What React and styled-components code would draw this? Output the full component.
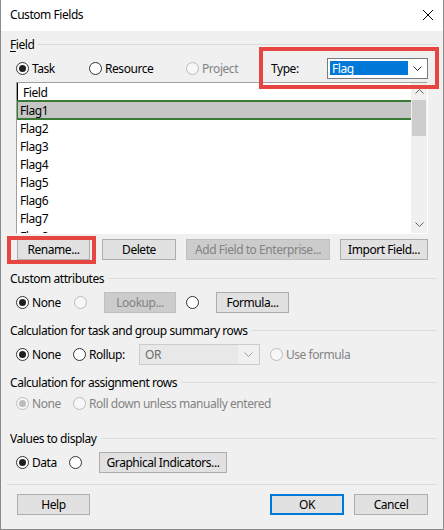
import React from "react";
import styled, { createGlobalStyle } from "styled-components";

const Global = createGlobalStyle`
  html, body { margin: 0; padding: 0; background: #ffffff; }
  body {
    font-family: "Segoe UI", "Noto Sans", "Open Sans", sans-serif;
    font-size: 12px;
    letter-spacing: -0.45px;
    color: #000;
  }
  * { box-sizing: border-box; }
`;

const Window = styled.div`
  width: 444px;
  height: 530px;
  border: 1px solid #8a8a8a;
  border-top: 0;
  background: #f0f0f0;
  display: flex;
  flex-direction: column;
  overflow: hidden;
`;

const TitleBar = styled.div`
  height: 31px;
  flex: none;
  background: #ffffff;
  display: flex;
  align-items: center;
  justify-content: space-between;
  padding: 0 9px 0 9px;
  font-size: 12px;
`;

const Title = styled.span`
  line-height: 16px;
  margin-top: -1px;
`;

const CloseBtn = styled.span`
  display: flex;
  width: 10px;
  height: 10px;
  margin-right: 1px;
  margin-top: -1px;
`;

const Body = styled.div`
  flex: 1;
  display: flex;
  flex-direction: column;
  padding: 0 6px 0 9px;
`;

const GroupHeader = styled.div`
  display: flex;
  align-items: center;
  height: 16px;
  margin-top: ${(p) => p.$mt}px;
  white-space: nowrap;
  &::after {
    content: "";
    flex: 1;
    height: 1px;
    background: #dcdcdc;
    margin-left: 4px;
  }
`;

const U = styled.span`
  text-decoration: underline;
  text-underline-offset: 2px;
`;

const Row = styled.div`
  display: flex;
  align-items: center;
  height: ${(p) => p.$h || 21}px;
  margin-top: ${(p) => p.$mt}px;
  padding-left: 6px;
  padding-right: 9px;
  white-space: nowrap;
`;

const RadioItem = styled.div`
  display: flex;
  align-items: center;
  flex: none;
  width: ${(p) => (p.$w ? `${p.$w}px` : "auto")};
  margin-left: ${(p) => p.$ml || 0}px;
  color: ${(p) => (p.$disabled ? "#838383" : "#000")};
`;

const Circle = styled.span`
  width: 13px;
  height: 13px;
  flex: none;
  border-radius: 50%;
  border: 1px solid ${(p) => (p.$disabled ? "#bcbcbc" : "#333333")};
  background: ${(p) => (p.$disabled ? "#f7f7f7" : "#ffffff")};
  display: flex;
  align-items: center;
  justify-content: center;
  margin-right: 3px;
  &::after {
    content: "";
    display: ${(p) => (p.$checked ? "block" : "none")};
    width: 7px;
    height: 7px;
    border-radius: 50%;
    background: ${(p) => (p.$disabled ? "#bcbcbc" : "#1f1f1f")};
  }
`;

const Radio = ({ label, checked, disabled, w, ml }) => (
  <RadioItem $w={w} $ml={ml} $disabled={disabled}>
    <Circle $checked={checked} $disabled={disabled} />
    {label && <span>{label}</span>}
  </RadioItem>
);

const Highlight = styled.div`
  position: relative;
  display: flex;
  align-items: center;
  flex: none;
  margin-left: ${(p) => p.$ml || 0}px;
  &::after {
    content: "";
    position: absolute;
    top: ${(p) => p.$t}px;
    bottom: ${(p) => p.$b}px;
    left: ${(p) => p.$l}px;
    right: ${(p) => p.$r}px;
    border: 4px solid #e6463f;
    pointer-events: none;
  }
`;

const TypeLabel = styled.span`
  width: 56px;
`;

const Combo = styled.div`
  width: ${(p) => p.$w}px;
  height: 21px;
  flex: none;
  border: 1px solid ${(p) => (p.$disabled ? "#cccccc" : "#7a7a7a")};
  background: ${(p) => (p.$disabled ? "#f0f0f0" : "#ffffff")};
  display: flex;
  align-items: stretch;
  padding: ${(p) => (p.$disabled ? "0" : "2px 0 3px 2px")};
`;

const ComboValue = styled.div`
  flex: 1;
  display: flex;
  align-items: center;
  padding-left: ${(p) => (p.$disabled ? 5 : 2)}px;
  background: ${(p) => (p.$disabled ? "#e8e8e8" : "#0078d7")};
  color: ${(p) => (p.$disabled ? "#6d6d6d" : "#ffffff")};
`;

const ComboArrow = styled.div`
  width: ${(p) => p.$w}px;
  flex: none;
  display: flex;
  align-items: center;
  justify-content: center;
`;

const Chevron = ({ color = "#333", up = false }) => (
  <svg width="9" height="5" viewBox="0 0 9 5">
    <polyline
      points={up ? "0.5,4.5 4.5,0.5 8.5,4.5" : "0.5,0.5 4.5,4.5 8.5,0.5"}
      fill="none"
      stroke={color}
      strokeWidth="1"
    />
  </svg>
);

const ListBox = styled.div`
  height: 152px;
  margin: 3px 9px 0 6px;
  border-style: solid;
  border-width: 1px;
  border-color: #a0a0a0 #ffffff #ffffff #a0a0a0;
  background: #ffffff;
  display: flex;
  overflow: hidden;
`;

const ListRows = styled.div`
  flex: 1;
  display: flex;
  flex-direction: column;
  overflow: hidden;
`;

const ListHeader = styled.div`
  height: 18px;
  flex: none;
  border-left: 1px solid #000;
  padding-left: 5px;
  display: flex;
  align-items: center;
`;

const ListRow = styled.div`
  height: 18px;
  flex: none;
  padding-left: 3px;
  display: flex;
  align-items: center;
  position: relative;
  background: ${(p) => (p.$selected ? "#c6c6c6" : "transparent")};
  box-shadow: ${(p) =>
    p.$selected
      ? "inset 0 1px #3b7a36, 0 -1px #3b7a36, inset 0 -1px #3b7a36, 0 1px #3b7a36, inset 1px 0 #3b7a36"
      : "none"};
`;

const Scrollbar = styled.div`
  width: 16px;
  flex: none;
  background: #f0f0f0;
  display: flex;
  flex-direction: column;
`;

const ScrollArrow = styled.div`
  height: 17px;
  display: flex;
  align-items: center;
  justify-content: center;
`;

const ScrollTrack = styled.div`
  flex: 1;
  padding: 0 1px;
`;

const Thumb = styled.div`
  height: 36px;
  background: #cdcdcd;
`;

const Button = styled.div`
  width: ${(p) => p.$w}px;
  height: 21px;
  flex: none;
  margin-left: ${(p) => p.$ml || 0}px;
  display: flex;
  align-items: center;
  justify-content: center;
  background: ${(p) => (p.$disabled ? "#cccccc" : "#e1e1e1")};
  border: ${(p) => (p.$default ? "2px solid #0078d7" : `1px solid ${p.$disabled ? "#bfbfbf" : "#adadad"}`)};
  color: ${(p) => (p.$disabled ? "#838383" : "#000")};
  white-space: nowrap;
`;

const Spacer = styled.div`
  flex: 1;
`;

const Separator = styled.div`
  height: 1px;
  background: #dcdcdc;
  margin: 11px 0 0 -3px;
`;

const flags = ["Flag1", "Flag2", "Flag3", "Flag4", "Flag5", "Flag6", "Flag7", "Flag8"];

export default function App() {
  return (
    <>
      <Global />
      <Window>
        <TitleBar>
          <Title>Custom Fields</Title>
          <CloseBtn>
            <svg width="10" height="10" viewBox="0 0 10 10">
              <path d="M0 0 L10 10 M10 0 L0 10" stroke="#000" strokeWidth="1" />
            </svg>
          </CloseBtn>
        </TitleBar>
        <Body>
          <GroupHeader $mt={5}>
            <span>
              <U>F</U>ield
            </span>
          </GroupHeader>
          <Row $mt={6}>
            <Radio label="Task" checked w={73} />
            <Radio label="Resource" w={97} />
            <Radio label="Project" disabled w={85} />
            <Highlight $t={-11} $b={-10} $l={-12} $r={-11}>
              <TypeLabel>Type:</TypeLabel>
              <Combo $w={101}>
                <ComboValue>Flag</ComboValue>
                <ComboArrow $w={19}>
                  <Chevron />
                </ComboArrow>
              </Combo>
            </Highlight>
          </Row>
          <ListBox>
            <ListRows>
              <ListHeader>Field</ListHeader>
              {flags.map((f, i) => (
                <ListRow key={f} $selected={i === 0}>
                  {f}
                </ListRow>
              ))}
            </ListRows>
            <Scrollbar>
              <ScrollArrow>
                <Chevron color="#606060" up />
              </ScrollArrow>
              <ScrollTrack>
                <Thumb />
              </ScrollTrack>
              <ScrollArrow>
                <Chevron color="#606060" />
              </ScrollArrow>
            </Scrollbar>
          </ListBox>
          <Row $mt={5} $h={21}>
            <Highlight $t={-3} $b={-4} $l={-10} $r={-6} $ml={1}>
              <Button $w={73}>Rename...</Button>
            </Highlight>
            <Button $w={74} $ml={12}>Delete</Button>
            <Button $w={144} $ml={10} $disabled>
              Add Field to Enterprise...
            </Button>
            <Button $w={88} $ml={10}>Import Field...</Button>
          </Row>
          <GroupHeader $mt={10}>Custom attributes</GroupHeader>
          <Row $mt={6}>
            <Radio label="None" checked w={58} />
            <Radio disabled w={30} />
            <Button $w={72} $disabled>Lookup...</Button>
            <Radio w={30} ml={10} />
            <Button $w={73}>Formula...</Button>
          </Row>
          <GroupHeader $mt={9}>Calculation for task and group summary rows</GroupHeader>
          <Row $mt={6}>
            <Radio label="None" checked w={57} />
            <Radio label="Rollup:" w={66} />
            <Combo $w={121} $disabled>
              <ComboValue $disabled>OR</ComboValue>
              <ComboArrow $w={21}>
                <Chevron color="#a0a0a0" />
              </ComboArrow>
            </Combo>
            <Radio label="Use formula" disabled ml={10} />
          </Row>
          <GroupHeader $mt={9}>Calculation for assignment rows</GroupHeader>
          <Row $mt={3}>
            <Radio label="None" checked disabled w={57} />
            <Radio label="Roll down unless manually entered" disabled />
          </Row>
          <GroupHeader $mt={16}>Values to display</GroupHeader>
          <Row $mt={6}>
            <Radio label="Data" checked w={53} />
            <Radio w={30} />
            <Button $w={128}>Graphical Indicators...</Button>
          </Row>
          <Separator />
          <Row $mt={9} $h={21}>
            <Button $w={73} $ml={1}>Help</Button>
            <Spacer />
            <Button $w={74} $default>OK</Button>
            <Button $w={74} $ml={10}>Cancel</Button>
          </Row>
        </Body>
      </Window>
    </>
  );
}
